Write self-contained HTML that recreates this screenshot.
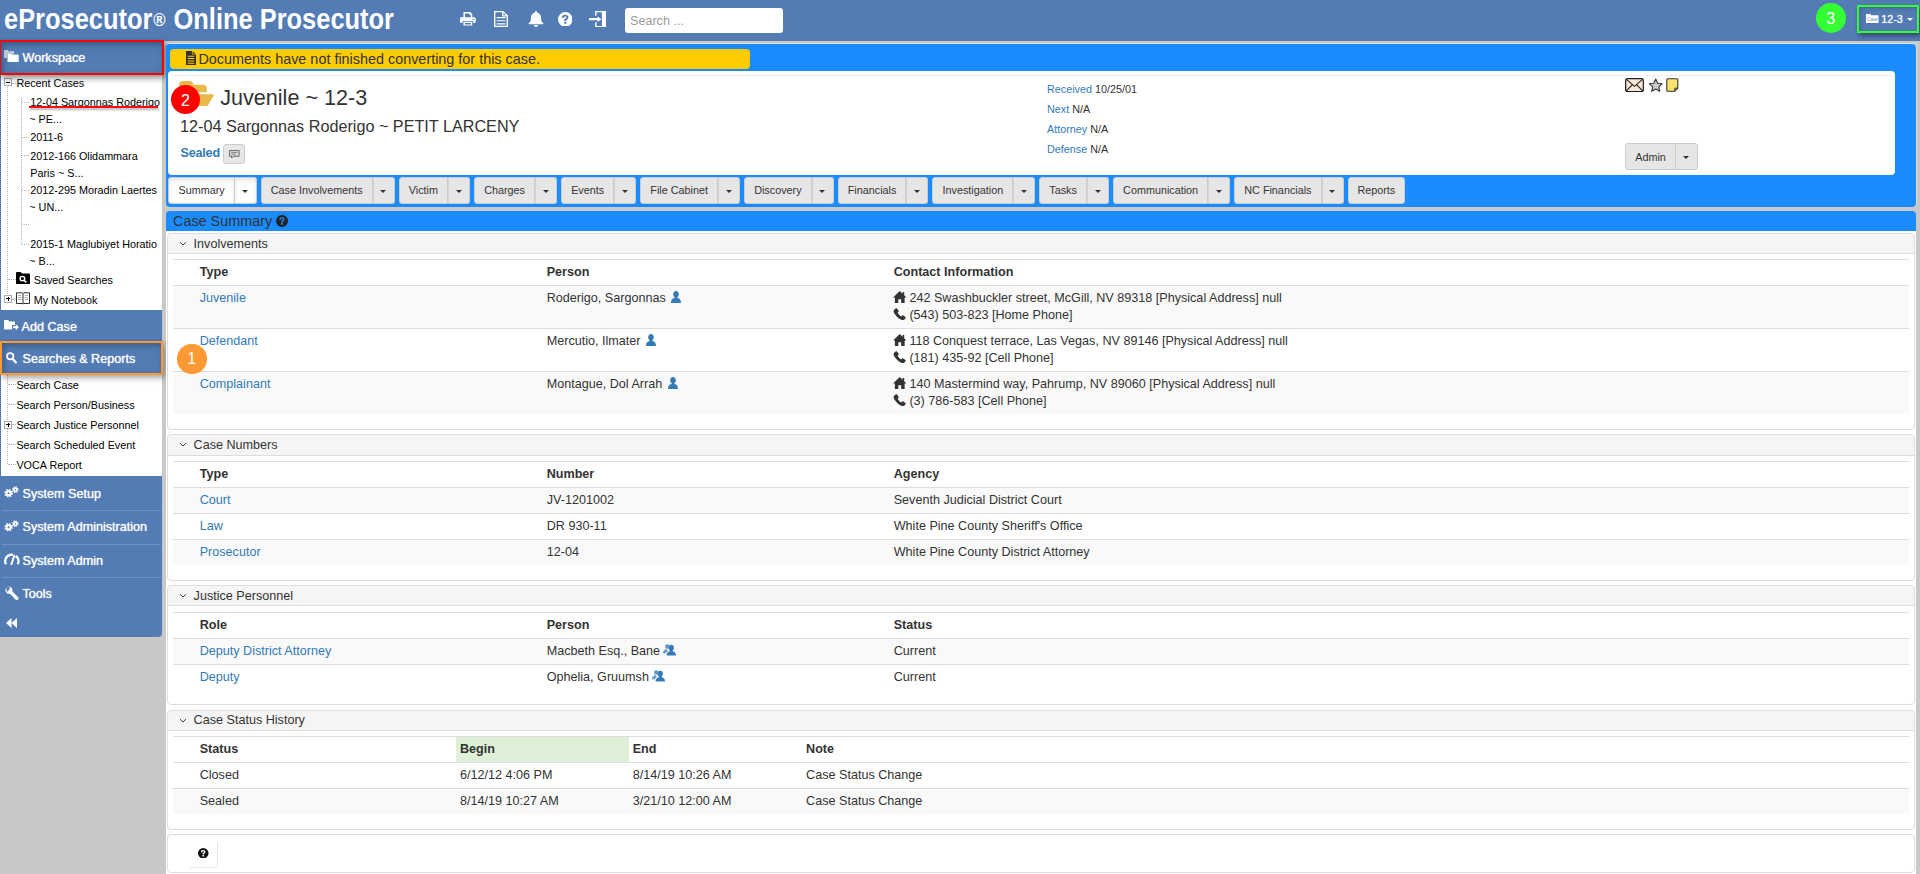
<!DOCTYPE html>
<html lang="en">
<head>
<meta charset="utf-8">
<title>eProsecutor Online Prosecutor</title>
<style>
*{box-sizing:border-box}
html,body{margin:0;padding:0;width:1920px;height:874px;overflow:hidden;background:#c8c8c8}
body{font-family:"Liberation Sans",Arial,sans-serif;font-size:12.6px;line-height:18px;color:#333;position:relative}
a{color:#337ab7;text-decoration:none}
svg{display:block}
.abs{position:absolute}

/* ---------- top header ---------- */
#hdr{position:absolute;left:0;top:0;width:1920px;height:40.5px;background:#537cb5}
#title{position:absolute;left:3.800px;top:1.300px;height:36px;line-height:36px;font-weight:bold;font-size:29px;color:#fff;white-space:nowrap;transform-origin:0 50%;transform:scaleX(.877)}
#title .reg{font-size:19px;position:relative;top:-3px;font-weight:bold;margin:0 1px}
.hic{position:absolute;fill:#fff}
#search{position:absolute;left:625px;top:8px;width:158px;height:25px;background:#fff;border-radius:3px;color:#999;font-size:12.6px;line-height:26px;padding-left:5px}
#badge3{position:absolute;left:1815.6px;top:3.4px;width:30px;height:30px;border-radius:50%;background:#33ff33;color:#fff;font-size:16px;line-height:32px;text-align:center}
#casebtn{position:absolute;left:1857px;top:5px;width:62px;height:28.2px;border:2.2px solid #33ff33;box-shadow:2px 3px 5px rgba(0,0,0,.4),inset 2px 2px 4px rgba(0,0,0,.15)}
#casebtn span{position:absolute;left:22.2px;top:4.800px;line-height:14px;color:#fff;font-size:10.8px;text-shadow:0 0 1px rgba(255,255,255,.8)}
#casebtn svg{position:absolute;fill:#fff}
#casebtn u{position:absolute;left:47.800px;top:10.800px;border-left:3.600px solid transparent;border-right:3.600px solid transparent;border-top:3.600px solid #fff}

/* ---------- sidebar ---------- */
#side{position:absolute;left:0;top:40.5px;width:162px;height:596px;background:#537cb5;border-radius:0 0 4px 0}
.mi{position:absolute;left:0;width:162px;color:#fff;font-size:12.6px;white-space:nowrap;text-shadow:0 0 1px rgba(255,255,255,.9)}
.mi span{position:absolute;left:22.5px;top:50%;margin-top:-9px;line-height:18px}
.mi svg{position:absolute;fill:#fff}
.sep{position:absolute;left:1.500px;width:159.500px;height:1px;background:#6f91c2}
.tree{position:absolute;left:1px;width:160.5px;background:#fff;font-size:10.8px;color:#000;line-height:17px;overflow:hidden}
.tree .t{position:absolute;white-space:nowrap;line-height:14px}
.vl{position:absolute;width:0;border-left:1px dotted #b4b4b4}
.hl{position:absolute;height:0;border-top:1px dotted #b4b4b4}
.pm{position:absolute;width:8px;height:8px;border:1px solid #aaa;background:#fff}
.pm:before{content:"";position:absolute;left:1px;top:2.500px;width:4px;height:1px;background:#000}
.pm.plus:after{content:"";position:absolute;left:2.500px;top:1px;width:1px;height:4px;background:#000}

/* ---------- main ---------- */
#casehdr{position:absolute;left:166px;top:43.8px;width:1750px;height:163.2px;background:#1a8cff;border-radius:2px 4px 4px 4px;box-shadow:1px 0 0 #e2dfdc,0 -1px 0 #e2dfdc}
#alert{position:absolute;left:4px;top:5.2px;width:580px;height:20px;border-radius:4px;background:#ffcc00;font-size:14.4px;line-height:20px;color:#333;white-space:nowrap}
#alert span{position:absolute;left:28.4px;top:0}
#cpanel{position:absolute;left:2px;top:27.7px;width:1727px;height:103.500px;background:#fff;border-radius:4px}
#cpanel .hr{position:absolute;left:4px;right:4px;top:4px;height:1px;background:#eee}
#h3{position:absolute;left:52.2px;top:11.3px;font-size:21.6px;line-height:30px;white-space:nowrap;color:#333}
#h4{position:absolute;left:12px;top:43px;font-size:16.2px;line-height:24px;white-space:nowrap;color:#333}
#sealed{position:absolute;left:12.5px;top:72.800px;letter-spacing:-.2px;font-size:12.6px;font-weight:bold;color:#337ab7;line-height:18px}
#cbtn{position:absolute;left:55.200px;top:72.600px;width:21.700px;height:19.900px;border:1px solid #ccc;border-radius:3px;background:#e6e6e6}
.kv{position:absolute;left:879px;font-size:10.8px;line-height:16px;white-space:nowrap;color:#333}
.kv b{font-weight:normal;color:#337ab7}
#badge2{position:absolute;left:170.800px;top:84.800px;width:29.300px;height:29.300px;border-radius:50%;background:#ff0000;color:#fff;font-size:16px;line-height:31px;text-align:center}
#badge1{position:absolute;left:177px;top:344px;width:29.5px;height:29.5px;border-radius:50%;background:#ff9933;color:#fff;font-size:16px;line-height:29.5px;text-align:center}
#tabs{position:absolute;left:2.3px;top:133.500px;height:26.500px;display:flex;white-space:nowrap}
.bg{display:flex;margin-right:3.9px;height:26.500px}
.bg>div{height:26.500px;border:1px solid #ccc;background:#e6e6e6;font-size:10.8px;line-height:24.500px;color:#333}
.bg.act>div{background:#fff;box-shadow:inset 0 2px 4px rgba(0,0,0,.1)}
.bg .m{padding:0 9.150px;border-radius:3px 0 0 3px}
.bg .m.only{border-radius:3px;padding:0 8.950px}
.bg .c{width:22px;border-left:0;border-radius:0 3px 3px 0;position:relative;box-shadow:inset 1px 0 0 rgba(0,0,0,.08)}
.bg .c:after{content:"";position:absolute;left:7.600px;top:11.300px;border-left:3.900px solid transparent;border-right:3.900px solid transparent;border-top:3.900px solid #333}
#csbar{position:absolute;left:166px;top:210.800px;width:1750px;height:20.200px;background:#1a8cff;border-radius:4px 4px 0 0;font-size:14.400px;line-height:20.200px;color:#333}
#csbar span{position:absolute;left:7px;top:0}
#mainbg{position:absolute;left:166px;top:231px;width:1750px;height:643px;background:#fff}

.panel{position:absolute;left:167px;width:1748px;border:1px solid #ddd;border-radius:4px;background:#fff}
.ph{position:absolute;left:0;top:0;right:0;height:20px;background:#f5f5f5;border-bottom:1px solid #ddd;border-radius:3px 3px 0 0;font-size:12.6px;line-height:21px;color:#333}
.ph span{position:absolute;left:25.6px;top:0}
.ph svg{position:absolute;left:11px;top:6.500px}
table{position:absolute;left:5px;width:1736px;border-collapse:separate;border-spacing:0;table-layout:fixed}
td,th{padding:3.4px 4px 3.6px;height:26px;line-height:18px;vertical-align:top;text-align:left;border-top:1px solid #ddd;font-size:12.6px;white-space:nowrap;overflow:visible;color:#333}
th{font-weight:bold}
td:first-child,th:first-child{padding-left:26.7px}
tr.s td{background:#f9f9f9}
tr.d td{height:43px;line-height:17px;padding-top:4.400px}
td svg,th svg{display:inline-block}
.iu{fill:#337ab7;vertical-align:2px;margin:-3px 0 -3px 3px}
.ik{fill:#333;vertical-align:-1.5px;margin:-3px 3px -3px 0}
</style>
</head>
<body>

<!-- HEADER -->
<div id="hdr">
  <div id="title">eProsecutor<span class="reg">®</span> Online Prosecutor</div>
  <svg class="hic" style="left:460.200px;top:12px" width="15.700" height="14.100" viewBox="0 0 16 15" preserveAspectRatio="none"><path d="M3.500 0h6.800L12.500 2.200V6h-1.600V3H9.500V1.500H5.100V6H3.500z"/><path d="M1.500 5.500h13c.8 0 1.500.7 1.500 1.500v4.500h-2.700V9.500H2.700v2H0V7c0-.8.700-1.500 1.500-1.500zM13.500 7.200a.7.700 0 1 0 0 1.400.7.700 0 0 0 0-1.400z"/><path d="M3.500 10.300h9V14.500h-9zM5 11.700v1.500h6v-1.500z"/></svg>
  <svg class="hic" style="left:493.500px;top:10.900px" width="14" height="16.200" viewBox="0 0 13 16" preserveAspectRatio="none"><path d="M0 0h8.500L13 4.500V16H0zM1.300 1.300v13.400h10.400V5.500H7.500V1.300zM8.700 1.800v2.500h2.500z"/><path d="M2.400 6h8.200v1.150H2.400zM2.400 9.100h8.200v1.150H2.400zM2.400 12.200h8.200v1.150H2.400z"/></svg>
  <svg class="hic" style="left:528px;top:10.800px" width="16" height="16" viewBox="0 0 16 16"><path d="M8 0c.6 0 1 .4 1 1v.5c2.400.5 4 2.500 4 5 0 3.500 1 4.800 2.300 5.800.3.300.2.900-.3.900H1c-.5 0-.6-.6-.3-.9C2 11.300 3 10 3 6.500c0-2.500 1.600-4.500 4-5V1c0-.6.400-1 1-1z"/><path d="M6 14h4a2 2 0 0 1-4 0z"/></svg>
  <svg class="hic" style="left:557.800px;top:11.800px" width="14.600" height="14.600" viewBox="0 0 16 16"><path d="M8 0a8 8 0 1 0 0 16A8 8 0 0 0 8 0zm1.200 13H6.800v-2.200h2.400zm1.800-5.600c-.5.700-1.300 1-1.600 1.500-.2.300-.2.600-.2 1.100H6.900c0-.9 0-1.500.4-2.100.5-.7 1.500-1 1.800-1.700.3-.7-.2-1.400-1.100-1.400-1 0-1.400.7-1.500 1.500H4.200C4.300 4.300 5.700 3 8 3c2.900 0 4 2.400 3 4.400z"/></svg>
  <svg class="hic" style="left:588.900px;top:10.700px" width="17.100" height="16.400" viewBox="0 0 17.100 16.400"><path d="M6.100 0H17.100V16.400H6.100V11.200H7.500V15.100H12.900V1.300H7.500V4.700H6.100z"/><path d="M0 7.100H8.500V5.400L12.400 8.200 8.500 11V9.300H0z"/></svg>
  <div id="search">Search ...</div>
  <div id="badge3">3</div>
  <div id="casebtn"><svg style="left:7px;top:6.700px" width="12.500" height="9.500" viewBox="0 0 12.500 9.500"><path d="M0 0h4.200l1 1.300h7.300v8.200H0z"/><text x="1.200" y="6.800" font-size="4.500" font-family="Liberation Sans,sans-serif" fill="#6f8fc4">Case</text></svg><span>12-3</span><u></u></div>
</div>

<!-- SIDEBAR -->
<div id="side"></div>
<div class="mi" style="top:40.5px;height:34.5px"><svg style="left:4px;top:9.300px" width="15" height="12.500" viewBox="0 0 15 12.500"><path d="M0 .6C0 .3.300 0 .6 0h3l.9 1.200h4.900c.3 0 .6.300.6.600V8H0z" opacity=".7"/><path d="M3.200 3.600c0-.3.300-.6.600-.6h3.300l.9 1.300h6.400c.3 0 .6.300.6.600v7c0 .3-.3.600-.6.600H3.800c-.3 0-.6-.3-.6-.6z"/><path d="M3.200 3.600c0-.3.300-.6.600-.6h3.300l.9 1.300h6.400c.3 0 .6.300.6.600v7c0 .3-.3.600-.6.600H3.800c-.3 0-.6-.3-.6-.6z" fill="none" stroke="#537cb5" stroke-width=".6"/></svg><span>Workspace</span></div>
<div class="tree" style="top:75px;height:235.3px">
<div class="vl" style="left:6px;top:12px;height:207px"></div>
<div class="vl" style="left:20px;top:22px;height:147px"></div>
<div class="hl" style="left:11px;top:8px;width:4px"></div>
<div class="hl" style="left:21px;top:27px;width:7px"></div>
<div class="hl" style="left:21px;top:62px;width:7px"></div>
<div class="hl" style="left:21px;top:80px;width:7px"></div>
<div class="hl" style="left:21px;top:115px;width:7px"></div>
<div class="hl" style="left:21px;top:149px;width:7px"></div>
<div class="hl" style="left:21px;top:169px;width:7px"></div>
<div class="hl" style="left:7px;top:203.5px;width:8px"></div>
<div class="hl" style="left:11px;top:223.5px;width:4px"></div>
<div class="pm" style="left:3px;top:3px"></div>
<div class="pm plus" style="left:3px;top:219.500px"></div>
<div class="t" style="left:15.4px;top:0.7px">Recent Cases</div>
<div class="t" style="left:29.3px;top:20.0px">12-04 Sargonnas Roderigo</div>
<div class="t" style="left:28.300px;top:37.0px">~ PE...</div>
<div class="t" style="left:29.3px;top:55.2px">2011-6</div>
<div class="t" style="left:29.3px;top:74.0px">2012-166 Olidammara</div>
<div class="t" style="left:29.3px;top:90.9px">Paris ~ S...</div>
<div class="t" style="left:29.3px;top:108.0px">2012-295 Moradin Laertes</div>
<div class="t" style="left:28.300px;top:125.0px">~ UN...</div>
<div class="t" style="left:29.3px;top:162.0px">2015-1 Maglubiyet Horatio</div>
<div class="t" style="left:28.300px;top:179.0px">~ B...</div>
<svg class="abs" style="left:15px;top:196.500px" width="14" height="12.300" viewBox="0 0 14 13" preserveAspectRatio="none"><path d="M0 1.2C0 .5.5 0 1.2 0h3.6l1.2 1.6h6.8c.7 0 1.2.5 1.2 1.2v9c0 .7-.5 1.2-1.2 1.2H1.200C.5 13 0 12.500 0 11.800z" fill="#000"/><circle cx="6.400" cy="7" r="2.300" fill="none" stroke="#fff" stroke-width="1.400"/><path d="M8 8.700l2.300 2.300" stroke="#fff" stroke-width="1.600"/></svg>
<div class="t" style="left:32.7px;top:198.0px">Saved Searches</div>
<svg class="abs" style="left:15px;top:216.5px" width="14" height="13" viewBox="0 0 14 13"><path d="M.5.8h5.800l.7.700.7-.7h5.800v10.700H7.700l-.7.700-.7-.7H.5z" fill="#fff" stroke="#333" stroke-width="1"/><path d="M7 1.500v10.500" stroke="#333" stroke-width="1"/><path d="M2 3.500h3.300M2 5.500h3.300M2 7.500h3.300M8.700 3.500H12M8.700 5.500H12M8.700 7.500H12" stroke="#999" stroke-width=".8"/></svg>
<div class="t" style="left:32.7px;top:218.1px">My Notebook</div>
</div>
<div class="mi" style="top:310.3px;height:31.2px"><svg style="left:4px;top:10px" width="15" height="12" viewBox="0 0 15 12"><path d="M0 .8C0 .3.300 0 .8 0h3.400l1.100 1.400h4.900c.5 0 .8.300.8.800V5H8v4.500H.8c-.5 0-.8-.3-.8-.8z"/><path d="M9 6.300h2.800V4.300L15 7.300l-3.200 3V8.300H9z"/></svg><span style="left:21.600px;margin-top:-7.700px">Add Case</span></div>
<div class="mi" style="top:341.5px;height:33.5px"><svg style="left:5.500px;top:10px" width="11" height="12" viewBox="0 0 12 13"><circle cx="4.600" cy="4.600" r="3.500" fill="none" stroke="#fff" stroke-width="1.900"/><path d="M7.200 7.400l3.600 4" stroke="#fff" stroke-width="2.400" stroke-linecap="round"/></svg><span style="margin-top:-8px">Searches &amp; Reports</span></div>
<div class="tree" style="top:375px;height:101px">
<div class="vl" style="left:6px;top:0;height:89px"></div>
<div class="hl" style="left:7px;top:9px;width:8px"></div>
<div class="hl" style="left:7px;top:29px;width:8px"></div>
<div class="hl" style="left:11px;top:49px;width:4px"></div>
<div class="hl" style="left:7px;top:69px;width:8px"></div>
<div class="hl" style="left:7px;top:89px;width:8px"></div>
<div class="pm plus" style="left:3px;top:45.500px"></div>
<div class="t" style="left:15.4px;top:3.2px">Search Case</div>
<div class="t" style="left:15.4px;top:23.4px">Search Person/Business</div>
<div class="t" style="left:15.4px;top:42.900px">Search Justice Personnel</div>
<div class="t" style="left:15.4px;top:63px">Search Scheduled Event</div>
<div class="t" style="left:15.4px;top:83.100px">VOCA Report</div>
</div>
<div class="mi" style="top:476.600px;height:34px"><svg style="left:4px;top:9.500px" width="15" height="12" viewBox="0 0 15 12"><circle cx="4.600" cy="7.200" r="3.500" fill="none" stroke="#fff" stroke-width="1.700" stroke-dasharray="1.450 1.300"/><circle cx="4.600" cy="7.200" r="2.100" fill="none" stroke="#fff" stroke-width="2.100"/><circle cx="11.300" cy="3.700" r="2.700" fill="none" stroke="#fff" stroke-width="1.300" stroke-dasharray="1.100 1.020"/><circle cx="11.300" cy="3.700" r="1.600" fill="none" stroke="#fff" stroke-width="1.700"/></svg><span>System Setup</span></div>
<div class="sep" style="top:510px"></div>
<div class="mi" style="top:510px;height:34.500px"><svg style="left:4px;top:9.500px" width="15" height="12" viewBox="0 0 15 12"><circle cx="4.600" cy="7.200" r="3.500" fill="none" stroke="#fff" stroke-width="1.700" stroke-dasharray="1.450 1.300"/><circle cx="4.600" cy="7.200" r="2.100" fill="none" stroke="#fff" stroke-width="2.100"/><circle cx="11.300" cy="3.700" r="2.700" fill="none" stroke="#fff" stroke-width="1.300" stroke-dasharray="1.100 1.020"/><circle cx="11.300" cy="3.700" r="1.600" fill="none" stroke="#fff" stroke-width="1.700"/></svg><span>System Administration</span></div>
<div class="sep" style="top:543.600px"></div>
<div class="mi" style="top:544px;height:33px"><svg style="left:3.500px;top:8.500px" width="16" height="13" viewBox="0 0 16 13"><path d="M2 11.300A6.500 6.500 0 0 1 7.800 1.700a6.500 6.500 0 0 1 1.200.1M11.800 3A6.500 6.500 0 0 1 13.700 11.300" fill="none" stroke="#fff" stroke-width="2.300"/><path d="M7.400 11.300L10.300 2.800" stroke="#fff" stroke-width="2" stroke-linecap="round"/></svg><span>System Admin</span></div>
<div class="sep" style="top:576.600px"></div>
<div class="mi" style="top:577px;height:33px"><svg style="left:4.500px;top:8.500px" width="14" height="14" viewBox="0 0 14 14"><path d="M4.300.2a3.900 3.900 0 0 0-3.600 5.300c.6 1.500 2.300 2.600 4.200 2.300l5.600 5.700c.7.700 1.800.7 2.500 0s.7-1.800 0-2.500L7.400 5.400C7.800 3.500 6.900 1.700 5.300.8L3.100 3l.4 1.500-1 1-1.500-.4z" transform="scale(1,1)"/><path d="M.9 2.500L3 .5 5 2.500 3 4.500z" fill="#537cb5"/></svg><span>Tools</span></div>
<div class="mi" style="top:610.5px;height:26px"><svg style="left:6px;top:7px" width="11" height="10" viewBox="0 0 11 10"><path d="M5.500 0v10L0 5zM11 0v10L5.500 5z"/></svg></div>
<div class="abs" style="left:-1px;top:40px;width:165px;height:35px;border:2px solid #f00;box-shadow:2px 3px 6px rgba(0,0,0,.45),inset 2px 3px 6px rgba(0,0,0,.28)"></div>
<div class="abs" style="left:0;top:341.3px;width:162.6px;height:33.5px;border:2px solid #f93;box-shadow:2px 3px 6px rgba(0,0,0,.35),inset 2px 3px 6px rgba(0,0,0,.25)"></div>
<div class="abs" style="left:29px;top:106.3px;width:129px;height:1.600px;background:#ff0a0a;box-shadow:1px 2px 2px rgba(0,0,0,.3)"></div>

<!-- MAIN -->
<div id="casehdr">
  <div id="alert"><svg class="abs" style="left:16.200px;top:2.200px" width="10" height="14.200" viewBox="0 0 10 15.500" preserveAspectRatio="none"><path d="M0 0h6.500L10 3.500V15.500H0z" fill="#333"/><path d="M6.500 0v3.500H10" fill="none" stroke="#fc0" stroke-width=".7"/><path d="M1.700 5.800h6.600M1.700 8.300h6.600M1.700 10.800h6.600M1.700 13.300h6.600" stroke="#fc0" stroke-width="1.100"/></svg><span>Documents have not finished converting for this case.</span></div>
  <div id="cpanel">
    <div class="hr"></div>
    <svg class="abs" style="left:10.800px;top:9.500px" width="35" height="25.500" viewBox="0 0 35 26"><path d="M0 3.200C0 1.400 1.400 0 3.200 0h7.600c1.500 0 2.700 1 3.100 2.400l.3 1.400h10.600c1.800 0 3.200 1.400 3.200 3.200v4.500H11.500c-1.600 0-3.100.9-3.900 2.300L0 24.500z" fill="#e8b84a"/><path d="M11.500 13.500h22.300c1 0 1.600 1 1.100 1.900l-5.300 8.800c-.6 1-1.700 1.700-2.900 1.700H2.500l6.300-10.900c.6-1 1.600-1.500 2.700-1.500z" fill="#e8b84a"/></svg>
    <svg class="abs" style="left:1457px;top:6.500px" width="19" height="14.250" viewBox="0 0 20 15"><rect x=".7" y=".7" width="18.600" height="13.600" rx="1.800" fill="#fbe5d6" stroke="#222" stroke-width="1.300"/><path d="M1.200 1.200L10 8.800 18.800 1.200M1.200 13.800L7.800 6.900M18.800 13.800L12.200 6.900" fill="none" stroke="#222" stroke-width="1.200"/></svg>
    <svg class="abs" style="left:1479.500px;top:7px" width="15.500" height="14" viewBox="0 0 15.500 14"><path d="M7.750 1l1.900 4.200 4.600.5-3.400 3.100.9 4.500-4-2.300-4 2.300.9-4.500L1.250 5.700l4.600-.5z" fill="#ccc" stroke="#333" stroke-width="1.100" stroke-linejoin="round"/></svg>
    <svg class="abs" style="left:1498px;top:7px" width="12.500" height="14" viewBox="0 0 12.500 14"><path d="M1.800.7h9c.6 0 1 .4 1 1V10l-3 3.300H1.800c-.6 0-1-.4-1-1V1.700c0-.6.400-1 1-1z" fill="#f9e26b" stroke="#333" stroke-width="1.100"/><path d="M8.800 13V10.200h2.800" fill="none" stroke="#333" stroke-width="1"/></svg>
    <div class="abs" style="left:1457.300px;top:71.800px;width:73.200px;height:26.700px;border:1px solid #ccc;border-radius:3px;background:#e6e6e6;font-size:10.800px;line-height:24px;color:#333"><span class="abs" style="left:8.900px;top:.5px">Admin</span><i class="abs" style="left:49.200px;top:0;bottom:0;width:1px;background:#ccc"></i><u class="abs" style="left:57.200px;top:11.500px;border-left:3.600px solid transparent;border-right:3.600px solid transparent;border-top:3.600px solid #333"></u></div>
    <div id="h3">Juvenile ~ 12-3</div>
    <div id="h4">12-04 Sargonnas Roderigo ~ PETIT LARCENY</div>
    <div id="sealed">Sealed</div>
    <div id="cbtn"><svg class="abs" style="left:5.200px;top:4.500px" width="10.500" height="9" viewBox="0 0 12 10"><path d="M.5.500h11v6.500H5L3 9V7H.5z" fill="#ddd" stroke="#555" stroke-width="1"/><path d="M2.500 2.800h7M2.500 4.800h5" stroke="#777" stroke-width="1"/></svg></div>
    <div class="kv" style="top:10px"><b>Received</b> 10/25/01</div>
    <div class="kv" style="top:30px"><b>Next</b> N/A</div>
    <div class="kv" style="top:50px"><b>Attorney</b> N/A</div>
    <div class="kv" style="top:70px"><b>Defense</b> N/A</div>
  </div>
<div id="tabs"><div class="bg act"><div class="m">Summary</div><div class="c"></div></div><div class="bg"><div class="m">Case Involvements</div><div class="c"></div></div><div class="bg"><div class="m">Victim</div><div class="c"></div></div><div class="bg"><div class="m">Charges</div><div class="c"></div></div><div class="bg"><div class="m">Events</div><div class="c"></div></div><div class="bg"><div class="m">File Cabinet</div><div class="c"></div></div><div class="bg"><div class="m">Discovery</div><div class="c"></div></div><div class="bg"><div class="m">Financials</div><div class="c"></div></div><div class="bg"><div class="m">Investigation</div><div class="c"></div></div><div class="bg"><div class="m">Tasks</div><div class="c"></div></div><div class="bg"><div class="m">Communication</div><div class="c"></div></div><div class="bg"><div class="m">NC Financials</div><div class="c"></div></div><div class="bg"><div class="m only">Reports</div></div></div>
</div>

<div id="csbar"><span>Case Summary</span><svg class="abs" style="left:110px;top:4px" width="12" height="12" viewBox="0 0 16 16"><circle cx="8" cy="8" r="8" fill="#222"/><path d="M6.800 10.800h2.400V13H6.800zM8 3c-2.300 0-3.700 1.300-3.800 3.300h2.300c.1-.8.500-1.500 1.500-1.500.9 0 1.400.7 1.100 1.400-.3.700-1.300 1-1.800 1.700-.4.600-.4 1.200-.4 2.100h2.300c0-.5 0-.8.200-1.100.3-.5 1.100-.8 1.600-1.500C12 5.400 10.900 3 8 3z" fill="#1a8cff"/></svg></div>
<div id="mainbg"></div>

<div class="panel" style="top:233px;height:197px"><div class="ph"><svg width="8" height="6" viewBox="0 0 8 6"><path d="M1.100 1.200L4 4 6.900 1.200" fill="none" stroke="#333" stroke-width="1"/></svg><span>Involvements</span></div><table style="top:25px"><colgroup><col style="width:369.7px"><col style="width:347px"><col style="width:1019.3px"></colgroup><tr><th>Type</th><th>Person</th><th>Contact Information</th></tr><tr class="s d"><td><a>Juvenile</a></td><td>Roderigo, Sargonnas <svg class="iu" style="margin-left:1.800px;vertical-align:2.800px" width="10" height="12" viewBox="0 0 10 12"><path d="M5 0c1.600 0 2.800 1.400 2.800 3.200 0 1.400-.7 2.600-1.600 3.100.1.500.4.800 1 1C9 7.900 10 9.400 10 12H0c0-2.600 1-4.100 2.800-4.700.6-.2.900-.5 1-1-.9-.5-1.600-1.700-1.600-3.100C2.200 1.400 3.400 0 5 0z"/></svg></td><td><svg class="ik" style="vertical-align:2.200px;margin-left:-.8px" width="13.500" height="12.500" viewBox="0 0 13 12"><path d="M6.500 0L0 6.200h1.800V12h3.300V8h2.800v4h3.300V6.200H13L10.800 4.100V.9H9.200v1.700z"/></svg>242 Swashbuckler street, McGill, NV 89318 [Physical Address] null<br><svg class="ik" style="vertical-align:1px;margin-left:-.8px" width="13.500" height="13" viewBox="0 0 13 12"><path d="M2.600.3c.4-.4.900-.4 1.200 0l1.600 2.100c.3.400.2.800-.1 1.100l-.9.900c.8 1.500 2 2.700 3.500 3.500l.9-.9c.3-.3.800-.4 1.100-.1l2.100 1.600c.4.300.4.800 0 1.200l-1 1c-.8.800-2 .9-3 .4C4.900 9.600 2.400 7.100.9 4.300.4 3.300.5 2.100 1.300 1.300z"/></svg>(543) 503-823 [Home Phone]</td></tr><tr class="d"><td><a>Defendant</a></td><td>Mercutio, Ilmater <svg class="iu" style="margin-left:1.800px;vertical-align:2.800px" width="10" height="12" viewBox="0 0 10 12"><path d="M5 0c1.600 0 2.800 1.400 2.800 3.200 0 1.400-.7 2.600-1.600 3.100.1.500.4.800 1 1C9 7.900 10 9.400 10 12H0c0-2.600 1-4.100 2.800-4.700.6-.2.900-.5 1-1-.9-.5-1.600-1.700-1.600-3.100C2.200 1.400 3.400 0 5 0z"/></svg></td><td><svg class="ik" style="vertical-align:2.200px;margin-left:-.8px" width="13.500" height="12.500" viewBox="0 0 13 12"><path d="M6.500 0L0 6.200h1.800V12h3.300V8h2.800v4h3.300V6.200H13L10.800 4.100V.9H9.200v1.700z"/></svg>118 Conquest terrace, Las Vegas, NV 89146 [Physical Address] null<br><svg class="ik" style="vertical-align:1px;margin-left:-.8px" width="13.500" height="13" viewBox="0 0 13 12"><path d="M2.600.3c.4-.4.900-.4 1.200 0l1.600 2.100c.3.400.2.800-.1 1.100l-.9.900c.8 1.500 2 2.700 3.500 3.500l.9-.9c.3-.3.800-.4 1.100-.1l2.100 1.600c.4.300.4.800 0 1.200l-1 1c-.8.800-2 .9-3 .4C4.900 9.600 2.400 7.100.9 4.300.4 3.300.5 2.100 1.300 1.300z"/></svg>(181) 435-92 [Cell Phone]</td></tr><tr class="s d"><td><a>Complainant</a></td><td>Montague, Dol Arrah <svg class="iu" style="margin-left:1.800px;vertical-align:2.800px" width="10" height="12" viewBox="0 0 10 12"><path d="M5 0c1.600 0 2.800 1.400 2.800 3.200 0 1.400-.7 2.600-1.600 3.100.1.500.4.800 1 1C9 7.900 10 9.400 10 12H0c0-2.600 1-4.100 2.800-4.700.6-.2.900-.5 1-1-.9-.5-1.600-1.700-1.600-3.100C2.200 1.400 3.400 0 5 0z"/></svg></td><td><svg class="ik" style="vertical-align:2.200px;margin-left:-.8px" width="13.500" height="12.500" viewBox="0 0 13 12"><path d="M6.500 0L0 6.200h1.800V12h3.300V8h2.800v4h3.300V6.200H13L10.800 4.100V.9H9.200v1.700z"/></svg>140 Mastermind way, Pahrump, NV 89060 [Physical Address] null<br><svg class="ik" style="vertical-align:1px;margin-left:-.8px" width="13.500" height="13" viewBox="0 0 13 12"><path d="M2.600.3c.4-.4.900-.4 1.200 0l1.600 2.100c.3.400.2.800-.1 1.100l-.9.900c.8 1.500 2 2.700 3.500 3.500l.9-.9c.3-.3.800-.4 1.100-.1l2.100 1.600c.4.300.4.800 0 1.200l-1 1c-.8.800-2 .9-3 .4C4.900 9.600 2.400 7.100.9 4.300.4 3.300.5 2.100 1.300 1.300z"/></svg>(3) 786-583 [Cell Phone]</td></tr></table></div>
<div class="panel" style="top:434px;height:147px"><div class="ph" style="height:21px;line-height:20px"><svg width="8" height="6" viewBox="0 0 8 6"><path d="M1.100 1.200L4 4 6.900 1.200" fill="none" stroke="#333" stroke-width="1"/></svg><span>Case Numbers</span></div><table style="top:26px"><colgroup><col style="width:369.7px"><col style="width:347px"><col style="width:1019.3px"></colgroup><tr><th>Type</th><th>Number</th><th>Agency</th></tr><tr class="s"><td><a>Court</a></td><td>JV-1201002</td><td>Seventh Judicial District Court</td></tr><tr class=""><td><a>Law</a></td><td>DR 930-11</td><td>White Pine County Sheriff's Office</td></tr><tr class="s"><td><a>Prosecutor</a></td><td>12-04</td><td>White Pine County District Attorney</td></tr></table></div>
<div class="panel" style="top:585px;height:120px"><div class="ph"><svg width="8" height="6" viewBox="0 0 8 6"><path d="M1.100 1.200L4 4 6.900 1.200" fill="none" stroke="#333" stroke-width="1"/></svg><span>Justice Personnel</span></div><table style="top:26px"><colgroup><col style="width:369.7px"><col style="width:347px"><col style="width:1019.3px"></colgroup><tr><th>Role</th><th>Person</th><th>Status</th></tr><tr class="s"><td><a>Deputy District Attorney</a></td><td>Macbeth Esq., Bane<svg class="iu" width="13" height="12" viewBox="0 0 13 12"><circle cx="4.300" cy="2.600" r="2.300" opacity=".75"/><path d="M0 9.300c0-2.400 1.200-4 3.600-4.100.5.600 1 1.200 1.300 1.800-1 .6-1.700 1.400-2.100 2.300z" opacity=".75"/><path d="M8.300.8c1.500 0 2.600 1.300 2.600 3 0 1.300-.6 2.400-1.400 2.900.1.500.4.700 1 .9 1.600.6 2.500 1.800 2.500 3.900H3.600c0-2.100.9-3.300 2.500-3.900.6-.2.900-.4 1-.9-.8-.5-1.400-1.600-1.400-2.900 0-1.700 1.100-3 2.600-3z"/></svg></td><td>Current</td></tr><tr class=""><td><a>Deputy</a></td><td>Ophelia, Gruumsh<svg class="iu" width="13" height="12" viewBox="0 0 13 12"><circle cx="4.300" cy="2.600" r="2.300" opacity=".75"/><path d="M0 9.300c0-2.400 1.200-4 3.600-4.100.5.600 1 1.200 1.300 1.800-1 .6-1.700 1.400-2.100 2.300z" opacity=".75"/><path d="M8.300.8c1.500 0 2.600 1.300 2.600 3 0 1.300-.6 2.400-1.400 2.900.1.500.4.700 1 .9 1.600.6 2.500 1.800 2.500 3.900H3.600c0-2.100.9-3.300 2.500-3.900.6-.2.900-.4 1-.9-.8-.5-1.400-1.600-1.400-2.900 0-1.700 1.100-3 2.600-3z"/></svg></td><td>Current</td></tr></table></div>
<div class="panel" style="top:710px;height:120px"><div class="ph" style="line-height:19px"><svg width="8" height="6" viewBox="0 0 8 6"><path d="M1.100 1.200L4 4 6.900 1.200" fill="none" stroke="#333" stroke-width="1"/></svg><span>Case Status History</span></div><table style="top:25px"><colgroup><col style="width:283px"><col style="width:172.700px"><col style="width:173.400px"><col style="width:1106.900px"></colgroup><tr><th>Status</th><th style="background:#dff0d8">Begin</th><th>End</th><th>Note</th></tr><tr class=""><td>Closed</td><td>6/12/12 4:06 PM</td><td>8/14/19 10:26 AM</td><td>Case Status Change</td></tr><tr class="s"><td>Sealed</td><td>8/14/19 10:27 AM</td><td>3/21/10 12:00 AM</td><td>Case Status Change</td></tr></table></div>
<div class="panel" style="top:834px;height:39px"><div class="abs" style="left:22px;top:6.500px;width:28px;height:26.500px;border-right:1px solid #e7e7e7;border-bottom:1px solid #e7e7e7;border-radius:0 0 2px 0"></div><svg class="abs" style="left:30.300px;top:12.600px" width="10.5" height="10.5" viewBox="0 0 16 16"><circle cx="8" cy="8" r="8" fill="#111"/><path d="M6.800 10.800h2.400V13H6.800zM8 3c-2.300 0-3.700 1.300-3.800 3.300h2.300c.1-.8.500-1.500 1.500-1.500.9 0 1.400.7 1.100 1.400-.3.700-1.300 1-1.800 1.700-.4.600-.4 1.200-.4 2.100h2.300c0-.5 0-.8.200-1.100.3-.5 1.100-.8 1.600-1.500C12 5.400 10.900 3 8 3z" fill="#fff"/></svg></div>
<div id="badge2">2</div>
<div id="badge1">1</div>
</body>
</html>
